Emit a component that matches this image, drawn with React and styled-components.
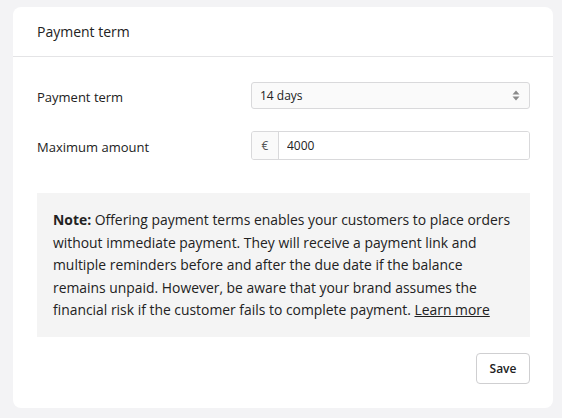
import React from "react";
import styled, { createGlobalStyle } from "styled-components";

const GlobalStyle = createGlobalStyle`
  html, body {
    margin: 0;
    padding: 0;
    background: #f3f3f5;
  }
  body {
    font-family: "Open Sans", "Lato", sans-serif;
    color: #222;
  }
`;

export default function App() {
  return (
    <>
      <GlobalStyle />
      <Page>
        <Card>
          <Header>Payment term</Header>
          <Body>
            <Row>
              <Label>Payment term</Label>
              <SelectBox>
                <span>14 days</span>
                <svg width="8" height="11" viewBox="0 0 8 11">
                  <path d="M4 0.5 L7.5 4.5 H0.5 Z" fill="#8a8a8a" />
                  <path d="M4 10.5 L7.5 6.5 H0.5 Z" fill="#8a8a8a" />
                </svg>
              </SelectBox>
            </Row>
            <Row>
              <Label>Maximum amount</Label>
              <InputGroup>
                <Addon>€</Addon>
                <Input defaultValue="4000" />
              </InputGroup>
            </Row>
            <Note>
              <strong>Note:</strong> Offering payment terms enables your
              customers to place orders
              <br />
              without immediate payment. They will receive a payment link and
              <br />
              multiple reminders before and after the due date if the balance
              <br />
              remains unpaid. However, be aware that your brand assumes the
              <br />
              financial risk if the customer fails to complete payment.{" "}
              <NoteLink href="#">Learn more</NoteLink>
            </Note>
            <Footer>
              <Button type="button">Save</Button>
            </Footer>
          </Body>
        </Card>
      </Page>
    </>
  );
}

const Page = styled.div`
  padding: 7px 9px 10px 13px;
`;

const Card = styled.div`
  background: #fff;
  border-radius: 8px;
  width: 540px;
`;

const Header = styled.div`
  height: 49px;
  display: flex;
  align-items: center;
  padding: 0 24px;
  border-bottom: 1px solid #e4e4e6;
  font-size: 14px;
`;

const Body = styled.div`
  padding: 25px 23px 24px 24px;
  display: flex;
  flex-direction: column;
`;

const Row = styled.div`
  display: grid;
  grid-template-columns: 214px 1fr;
  align-items: center;
  margin-bottom: 22px;
`;

const Label = styled.label`
  font-size: 13px;
  padding-top: 3px;
`;

const SelectBox = styled.div`
  height: 27px;
  box-sizing: border-box;
  border: 1px solid #d9d9db;
  border-radius: 3px;
  background: #fafafa;
  display: flex;
  align-items: center;
  justify-content: space-between;
  padding: 0 9px 0 8px;
  font-size: 12px;
`;

const InputGroup = styled.div`
  height: 29px;
  box-sizing: border-box;
  border: 1px solid #d9d9db;
  border-radius: 3px;
  display: flex;
  overflow: hidden;
`;

const Addon = styled.div`
  width: 26px;
  background: #fafafa;
  border-right: 1px solid #d9d9db;
  display: flex;
  align-items: center;
  justify-content: center;
  font-size: 12px;
  color: #555;
`;

const Input = styled.input`
  flex: 1;
  border: none;
  outline: none;
  padding: 0 8px;
  font-family: inherit;
  font-size: 12px;
  color: #222;
`;

const Note = styled.p`
  margin: 11px 0 0;
  background: #f4f4f4;
  padding: 16px 10px 15px 16px;
  font-size: 13.9px;
  line-height: 22.5px;
  white-space: nowrap;
`;

const NoteLink = styled.a`
  color: inherit;
  text-decoration: underline;
`;

const Footer = styled.div`
  display: flex;
  justify-content: flex-end;
  margin-top: 16px;
`;

const Button = styled.button`
  width: 54px;
  height: 31px;
  background: #fff;
  border: 1px solid #cfcfd1;
  border-radius: 4px;
  font-family: inherit;
  font-size: 12px;
  font-weight: 600;
  color: #222;
`;
